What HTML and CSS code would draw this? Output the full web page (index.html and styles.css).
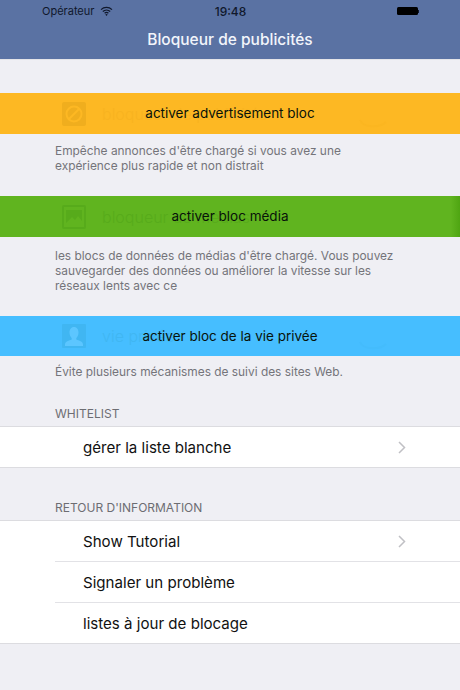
FILE: index.html
```html
<!DOCTYPE html>
<html lang="fr">
<head>
  <meta charset="UTF-8" />
  <title>Bloqueur de publicités</title>
  <link rel="stylesheet" href="styles.css">
</head>
<body>
  <!-- Barre du haut -->
  <header class="navbar">
    <div class="status">
      <div class="status-left">
        <span>Opérateur</span>
        <svg class="wifi" width="13" height="10" viewBox="0 0 13 10">
          <path d="M1 3.6a8 8 0 0 1 11 0M2.8 5.5a5.4 5.4 0 0 1 7.4 0M4.6 7.3a2.8 2.8 0 0 1 3.8 0" fill="none" stroke="#10182c" stroke-width="1.2"/>
          <path d="M6.5 10l-1.2-1.5a1.8 1.8 0 0 1 2.4 0z" fill="#10182c"/>
        </svg>
      </div>
      <span class="status-time">19:48</span>
      <div class="status-right">
        <span class="battery"></span>
        <span class="battery-tip"></span>
      </div>
    </div>
    <h1 class="nav-title">Bloqueur de publicités</h1>
  </header>

  <!-- Bandeaux -->
  <section class="band band-yellow">
    <svg class="ghost-icon" width="24" height="24" viewBox="0 0 24 24">
      <rect width="24" height="24" rx="2" fill="#f0ae1e"/>
      <circle cx="12" cy="12" r="7.5" fill="none" stroke="#fdb823" stroke-width="2"/>
      <path d="M7 17L17 7" stroke="#fdb823" stroke-width="2"/>
    </svg>
    <span class="ghost-text">bloqueur de publicités</span>
    <svg class="ghost-switch" width="30" height="12" viewBox="0 0 30 12"><path d="M2 1c3 8 20 8 26 2" fill="none" stroke="#fbb621" stroke-width="2"/></svg>
    <span class="band-label">activer advertisement bloc</span>
  </section>
  <p class="note note-first">Empêche annonces d'être chargé si vous avez une<br>expérience plus rapide et non distrait</p>

  <section class="band band-green">
    <svg class="ghost-icon" width="24" height="24" viewBox="0 0 24 24">
      <rect x="1" y="1" width="22" height="22" rx="1" fill="none" stroke="#57ab1b" stroke-width="2"/>
      <path d="M4 18l6-6 3 3 3-4 4 5v-11H4z" fill="#57ab1b"/>
    </svg>
    <span class="ghost-text">bloqueur de médias</span>
    <span class="band-label">activer bloc média</span>
  </section>
  <p class="note note-second">les blocs de données de médias d'être chargé. Vous pouvez<br>sauvegarder des données ou améliorer la vitesse sur les<br>réseaux lents avec ce</p>

  <section class="band band-blue">
    <svg class="ghost-icon" width="24" height="24" viewBox="0 0 24 24">
      <rect width="24" height="24" rx="1" fill="#40b6f2"/>
      <path d="M12 3c3 0 4.500 2.500 4.500 5.500 0 2.500-1 4.500-2.200 5.500v1.500c2.500 1 6.700 2 6.700 5V22H3v-1.500c0-3 4.200-4 6.700-5V14c-1.200-1-2.200-3-2.200-5.500C7.500 5.500 9 3 12 3z" fill="#5cc6ff"/>
    </svg>
    <span class="ghost-text">vie privée</span>
    <svg class="ghost-switch" width="30" height="12" viewBox="0 0 30 12"><path d="M2 1c3 8 20 8 26 2" fill="none" stroke="#44bcfc" stroke-width="2"/></svg>
    <span class="band-label">activer bloc de la vie privée</span>
  </section>
  <p class="note note-third">Évite plusieurs mécanismes de suivi des sites Web.</p>

  <!-- Listes -->
  <h2 class="group-title group-whitelist">WHITELIST</h2>
  <ul class="list">
    <li class="row">
      <span>gérer la liste blanche</span>
      <svg class="chevron" width="8" height="13" viewBox="0 0 8 13"><path d="M1 1l5.500 5.500L1 12" fill="none" stroke="#c0c0c5" stroke-width="1.500"/></svg>
    </li>
  </ul>

  <h2 class="group-title group-retour">RETOUR D'INFORMATION</h2>
  <ul class="list">
    <li class="row">
      <span>Show Tutorial</span>
      <svg class="chevron" width="8" height="13" viewBox="0 0 8 13"><path d="M1 1l5.500 5.500L1 12" fill="none" stroke="#c0c0c5" stroke-width="1.500"/></svg>
    </li>
    <li class="row"><span>Signaler un problème</span></li>
    <li class="row"><span>listes à jour de blocage</span></li>
  </ul>
</body>
</html>
```

FILE: styles.css
```css
/* Global */
html, body {
  height: 100%;
}
body {
  margin: 0;
  background: #efeff4;
  font-family: Inter, "Liberation Sans", sans-serif;
  color: #111;
  overflow: hidden;
}

/* Barre du haut */
.navbar {
  height: 60px;
  box-sizing: border-box;
  background: #5a72a3;
  padding-top: 3px;
  border-bottom: 1px solid #e4e4e8;
}
.status {
  display: grid;
  grid-template-columns: 1fr auto 1fr;
  align-items: center;
  height: 16px;
  padding: 0 41px 0 42px;
  font-size: 11px;
  color: #10182c;
}
.status-left {
  display: flex;
  align-items: center;
  gap: 6px;
}
.status-time {
  font-size: 12px;
  font-weight: 500;
}
.status-right {
  display: flex;
  align-items: center;
  justify-content: flex-end;
}
.battery {
  width: 21px;
  height: 8px;
  background: #000;
  border-radius: 1.500px;
}
.battery-tip {
  width: 1.500px;
  height: 3px;
  background: #10182c;
}
.nav-title {
  margin: 11px 0 0;
  font-size: 15.500px;
  font-weight: 500;
  text-align: center;
  color: #f2f5fb;
}

/* Bandeaux */
.band {
  position: relative;
  display: flex;
  align-items: center;
  height: 41px;
  padding-left: 62px;
  font-size: 13.500px;
  overflow: hidden;
}
.band-yellow {
  margin-top: 33px;
  background: #fdb823;
  color: #f8b320;
}
.band-green {
  background: linear-gradient(90deg, #60b41f 98%, #4fa512);
  color: #57ab1b;
}
.band-blue {
  height: 40px;
  background: #46beff;
  color: #40b6f2;
}
.ghost-icon {
  flex: none;
}
.ghost-text {
  margin-left: 16px;
  font-size: 16px;
  font-weight: 300;
}
.ghost-switch {
  position: absolute;
  left: 358px;
  bottom: 3px;
}
/* Libellé centré, passe sur le texte d'arrière-plan */
.band-label {
  position: absolute;
  top: 0;
  left: 0;
  right: 0;
  line-height: 40px;
  text-align: center;
  color: #08130a;
}

.note {
  margin: 0;
  padding-left: 55px;
  font-size: 11.900px;
  line-height: 15px;
  color: #74747a;
}
.note-first {
  padding-top: 9px;
  padding-bottom: 23px;
}
.note-second {
  padding-top: 11px;
  padding-bottom: 23px;
}
.note-third {
  padding-top: 8px;
}

/* Listes */
.group-title {
  margin: 0;
  padding-left: 55px;
  font-size: 12px;
  font-weight: 400;
  line-height: 15px;
  color: #6d6d72;
}
.group-whitelist {
  margin-top: 27px;
}
.group-retour {
  margin-top: 32px;
}
.list {
  list-style: none;
  margin: 5px 0 0;
  padding: 0;
  background: #fff;
  border-top: 1px solid #dcdce0;
  border-bottom: 1px solid #dcdce0;
}
.row {
  display: flex;
  align-items: center;
  justify-content: space-between;
  height: 40px;
  margin-left: 55px;
  padding: 0 54px 0 28px;
  font-size: 15.100px;
  border-top: 1px solid #e2e2e6;
}
.row:first-child {
  border-top: none;
}
.chevron {
  flex: none;
}
```
